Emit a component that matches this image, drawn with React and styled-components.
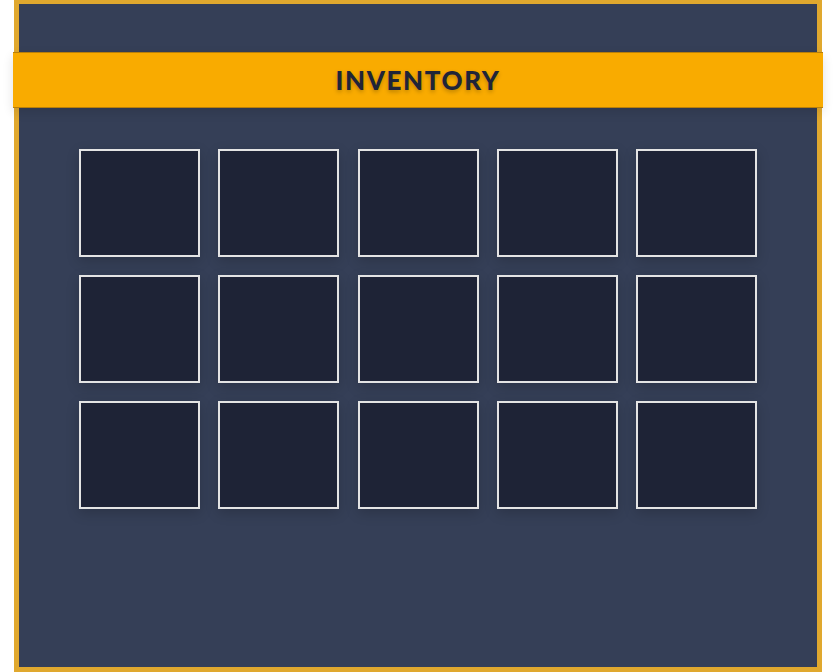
import React from 'react'
import styled, { createGlobalStyle } from 'styled-components'

const GlobalStyle = createGlobalStyle`
    html, body {
        margin: 0;
        padding: 0;
        background: #ffffff;
        font-family: "Lato", "Open Sans", sans-serif;
    }
`

const Page = styled.div`
    padding: 0 15px 0 14px;
    height: 672px;
    overflow: hidden;
`

const Frame = styled.div`
    box-sizing: border-box;
    width: 808px;
    height: 672px;
    background: #353f57;
    border: 5px solid #e0a82e;
    border-top-width: 4px;
    padding-top: 48px;
    display: flex;
    flex-direction: column;
    align-items: center;
`

const Banner = styled.div`
    align-self: stretch;
    margin: 0 -6px;
    height: 56px;
    background: #f9ab00;
    border-top: 1px solid #b97f0a;
    border-bottom: 1px solid #b97f0a;
    box-sizing: border-box;
    box-shadow: 0 4px 10px rgba(0, 0, 0, 0.12);
    display: flex;
    justify-content: center;
    align-items: center;
    color: #1f2438;
    font-weight: 900;
    font-size: 26px;
    letter-spacing: 1.6px;
    text-shadow: 0 2px 4px rgba(0, 0, 0, 0.25);
    position: relative;
    z-index: 1;
`

const Grid = styled.div`
    margin-top: 41px;
    display: grid;
    grid-template-columns: repeat(5, 121px);
    grid-auto-rows: 108px;
    column-gap: 18.25px;
    row-gap: 18px;
`

const Slot = styled.div`
    box-sizing: border-box;
    background: #1e2336;
    border: 2px solid #e4e4e4;
    box-shadow: 0 4px 12px rgba(0, 0, 0, 0.18);
`

function App() {
    const slots = Array.from({ length: 15 }, (_, i) => i)
    return (
        <>
            <GlobalStyle />
            <Page>
                <Frame>
                    <Banner>INVENTORY</Banner>
                    <Grid>
                        {slots.map(i => <Slot key={i} />)}
                    </Grid>
                </Frame>
            </Page>
        </>
    )
}

export default App
